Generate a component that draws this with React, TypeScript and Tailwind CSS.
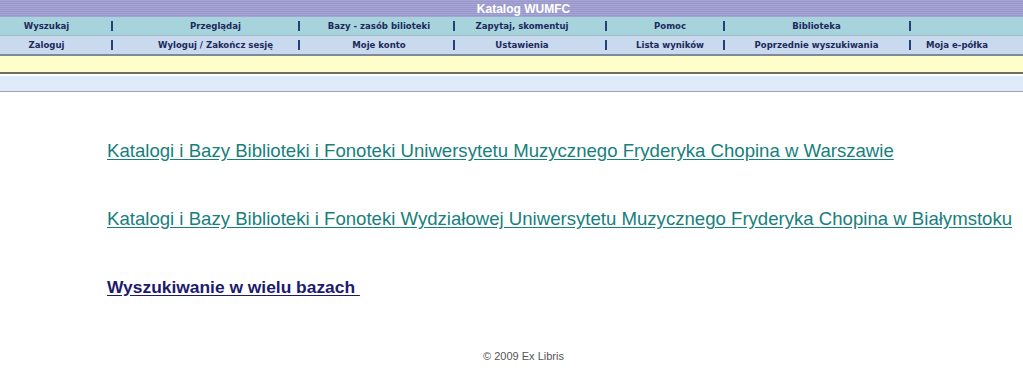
const row1 = [
  { label: "Wyszukaj", w: "w-[113px] pr-[20px]" },
  { label: "Przeglądaj", w: "w-[187px] pl-[18px]" },
  { label: "Bazy - zasób bilioteki", w: "w-[155px] pl-[3px]" },
  { label: "Zapytaj, skomentuj", w: "w-[152px] pr-[18px]" },
  { label: "Pomoc", w: "w-[118px] pl-[8px]" },
  { label: "Biblioteka", w: "w-[186px] pr-[3px]" },
  { label: "", w: "flex-1 pr-[20px]", last: true },
];

const row2 = [
  { label: "Zaloguj", w: "w-[113px] pr-[20px]" },
  { label: "Wyloguj / Zakończ sesję", w: "w-[187px] pl-[18px]" },
  { label: "Moje konto", w: "w-[155px] pl-[3px]" },
  { label: "Ustawienia", w: "w-[152px] pr-[18px]" },
  { label: "Lista wyników", w: "w-[118px] pl-[8px]" },
  { label: "Poprzednie wyszukiwania", w: "w-[186px] pr-[3px]" },
  { label: "Moja e-półka", w: "flex-1 pr-[20px]", last: true },
];

type Cell = { label: string; w: string; last?: boolean };

function NavRow({ cells, bg }: { cells: Cell[]; bg: string }) {
  return (
    <div className={`flex h-[18px] items-center ${bg}`}>
      {cells.map((c, i) => (
        <div key={i} className={`relative flex h-full items-center ${c.w}`}>
          <a className="flex-1 text-center font-['DejaVu_Sans_Condensed','Liberation_Sans',sans-serif] text-[9.5px] font-bold leading-none text-[#1c2a5c]">
            {c.label}
          </a>
          {!c.last && <span className="absolute right-0 top-[4px] h-[10px] w-[2px] bg-[#23407a]" />}
        </div>
      ))}
    </div>
  );
}

export default function App() {
  return (
    <div className="min-h-[389px] bg-white font-['Liberation_Sans',Arial,sans-serif]">
      <div className="flex h-[17px] items-center justify-center bg-[repeating-linear-gradient(180deg,#a5a4d5_0px,#a5a4d5_1px,#9a98ca_1px,#9a98ca_2px)] pl-6">
        <span className="text-[12px] font-bold leading-none text-white">Katalog WUMFC</span>
      </div>
      <div className="border-b border-[#9fbcc6]">
        <NavRow cells={row1} bg="bg-[#a7d3dc]" />
      </div>
      <div className="border-b-2 border-[#7c8a99]">
        <NavRow cells={row2} bg="bg-[#c9d9ee]" />
      </div>
      <div className="h-[18px] border-b-2 border-[#6e6e64] bg-[#fffdc9]" />
      <div className="mt-[2px] h-[16px] border-b border-[#9aa4b2] bg-[#e0ebf9]" />

      <div className="flex flex-col gap-[44px] pl-[107px] pt-[47px]">
        <a className="text-[18.6px] leading-[24px] text-[#17807c] underline underline-offset-2">
          Katalogi i Bazy Biblioteki i Fonoteki Uniwersytetu Muzycznego Fryderyka Chopina w Warszawie
        </a>
        <a className="whitespace-nowrap text-[18.6px] leading-[24px] text-[#17807c] underline underline-offset-2">
          Katalogi i Bazy Biblioteki i Fonoteki Wydziałowej Uniwersytetu Muzycznego Fryderyka Chopina w Białymstoku
        </a>
        <a className="whitespace-pre text-[17.4px] font-bold leading-[24px] text-[#1d1b6b] underline underline-offset-2">
          {"Wyszukiwanie w wielu bazach "}
        </a>
      </div>

      <div className="pl-6 pt-[49px] text-center text-[11px] text-[#555]">© 2009 Ex Libris</div>
    </div>
  );
}
